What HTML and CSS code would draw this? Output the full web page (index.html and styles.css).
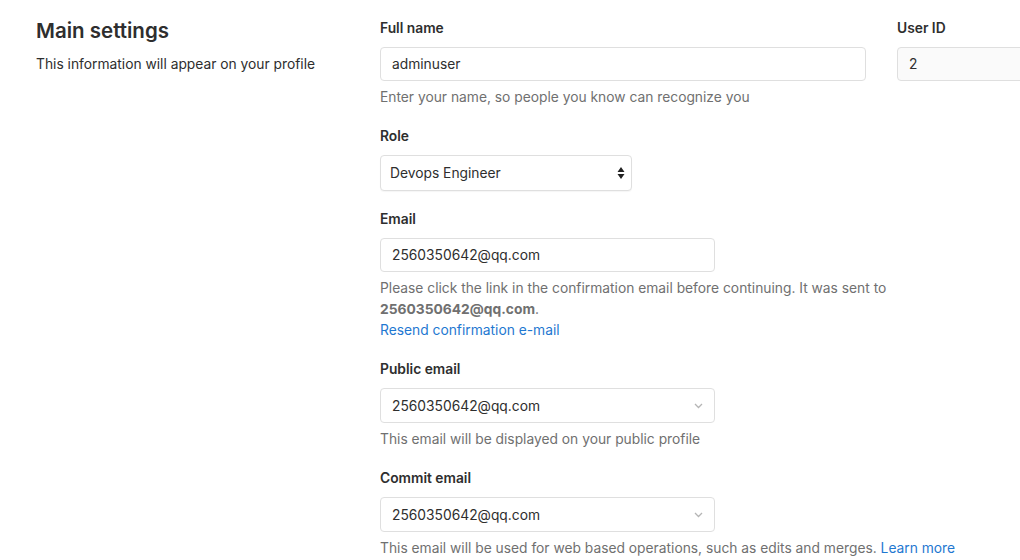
FILE: index.html
```html
<!DOCTYPE html>
<html>
<head>
<meta charset="utf-8">
<link rel="stylesheet" href="styles.css">
</head>
<body>
<div class="page">
  <div class="intro">
    <h4 class="title">Main settings</h4>
    <p class="subtitle">This information will appear on your profile</p>
  </div>
  <div class="form">
    <div class="row">
      <div class="group col-name">
        <div class="label">Full name</div>
        <div class="control">adminuser</div>
        <div class="help">Enter your name, so people you know can recognize you</div>
      </div>
      <div class="group col-id">
        <div class="label">User ID</div>
        <div class="control readonly">2</div>
      </div>
    </div>

    <div class="group">
      <div class="label">Role</div>
      <div class="control select role">
        <span>Devops Engineer</span>
        <svg class="updown" width="8" height="14" viewBox="0 0 8 14"><path d="M4 1 L7.5 6 H0.5 Z M4 13 L0.5 8 H7.5 Z" fill="#222"/></svg>
      </div>
    </div>

    <div class="group">
      <div class="label">Email</div>
      <div class="control medium">2560350642@qq.com</div>
      <div class="help">Please click the link in the confirmation email before continuing. It was sent to<br><strong>2560350642@qq.com</strong>.<br><a class="link" href="#">Resend confirmation e-mail</a></div>
    </div>

    <div class="group">
      <div class="label">Public email</div>
      <div class="control select medium">
        <span>2560350642@qq.com</span>
        <svg class="chev" width="9" height="6" viewBox="0 0 9 6"><path d="M1 1 L4.5 4.5 L8 1" fill="none" stroke="#b5b5b5" stroke-width="1.3"/></svg>
      </div>
      <div class="help">This email will be displayed on your public profile</div>
    </div>

    <div class="group">
      <div class="label">Commit email</div>
      <div class="control select medium">
        <span>2560350642@qq.com</span>
        <svg class="chev" width="9" height="6" viewBox="0 0 9 6"><path d="M1 1 L4.5 4.5 L8 1" fill="none" stroke="#b5b5b5" stroke-width="1.3"/></svg>
      </div>
      <div class="help">This email will be used for web based operations, such as edits and merges. <a class="link" href="#">Learn more</a></div>
    </div>
  </div>
</div>
</body>
</html>
```

FILE: styles.css
```css
html, body {
  margin: 0;
  padding: 0;
  background: #ffffff;
  overflow: hidden;
}
body {
  font-family: Inter, "Liberation Sans", Arial, sans-serif;
  font-size: 13.8px;
  color: #2e2e2e;
  width: 1020px;
  height: 560px;
}
.page {
  display: flex;
  padding-left: 36px;
  padding-top: 18px;
}
.intro {
  width: 344px;
  flex: none;
}
.title {
  margin: 0;
  font-size: 20.5px;
  font-weight: 600;
  line-height: 26px;
  color: #2e2e2e;
}
.subtitle {
  margin: 10px 0 0 0;
  line-height: 20px;
  color: #2e2e2e;
}
.form {
  flex: none;
  width: 760px;
}
.row {
  display: flex;
  gap: 31px;
}
.col-name {
  width: 486px;
  flex: none;
}
.col-id {
  width: 240px;
  flex: none;
}
.group {
  margin-bottom: 18px;
}
.label {
  font-weight: 600;
  line-height: 20px;
  margin-bottom: 9px;
  color: #2e2e2e;
}
.control {
  box-sizing: border-box;
  height: 34px;
  border: 1px solid #dfdfdf;
  border-radius: 4px;
  padding: 0 11px;
  display: flex;
  align-items: center;
  line-height: 20px;
  color: #2e2e2e;
  background: #fff;
}
.readonly {
  background: #fafafa;
}
.select {
  justify-content: space-between;
  height: 35px;
}
.role {
  width: 252px;
  height: 36px;
  padding-left: 9px;
  padding-right: 6px;
  box-shadow: 0 1px 1px rgba(0,0,0,0.04);
}
.medium {
  width: 335px;
}
.help {
  margin-top: 6px;
  line-height: 21px;
  color: #707070;
}
.help strong {
  font-weight: 700;
  color: #707070;
}
.link {
  color: #1f78d1;
  text-decoration: none;
}
```
